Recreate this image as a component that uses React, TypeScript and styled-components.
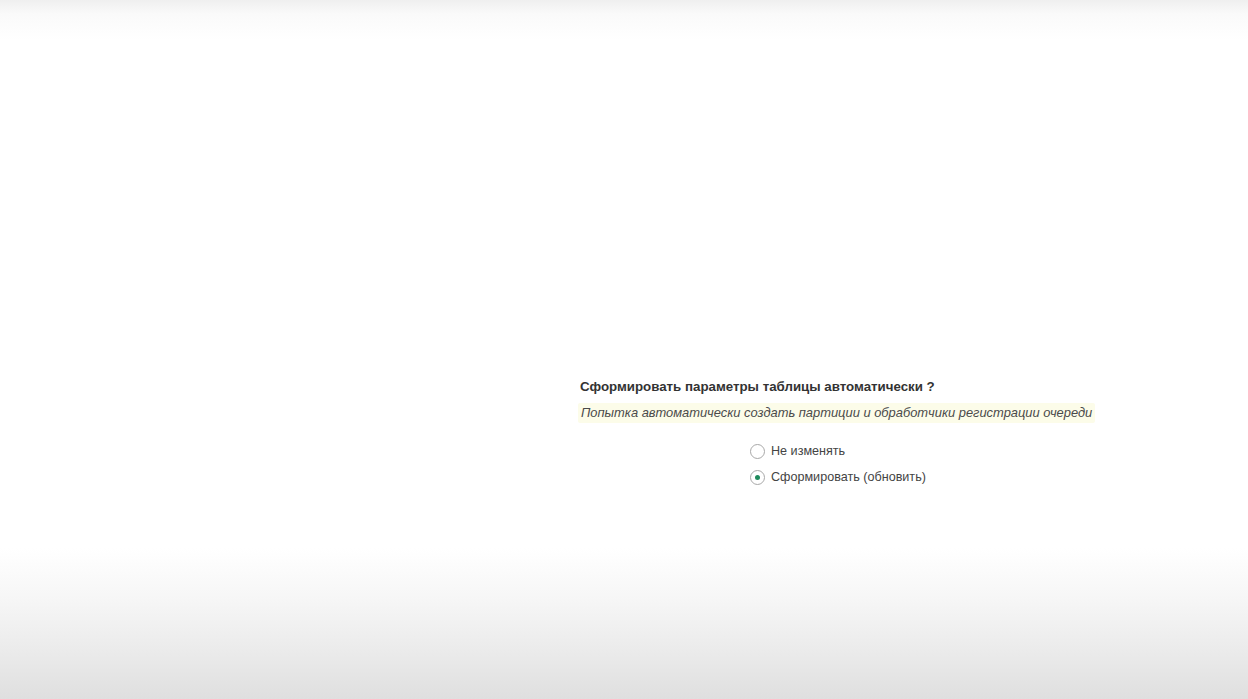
import React, { useState } from "react";
import styled, { createGlobalStyle } from "styled-components";

const Global = createGlobalStyle`
  html, body { margin: 0; padding: 0; }
  body { font-family: Arial, "Liberation Sans", sans-serif; }
`;

const Page = styled.div`
  width: 1248px;
  height: 699px;
  box-sizing: border-box;
  background: linear-gradient(
    to bottom,
    #efefef 0px,
    #fafafa 14px,
    #ffffff 40px,
    #ffffff 548px,
    #f6f6f6 600px,
    #ebebeb 650px,
    #dfdfdf 699px
  );
  padding: 379px 0 0 578px;
  overflow: hidden;
`;

const Form = styled.div`
  display: flex;
  flex-direction: column;
  align-items: flex-start;
`;

const Title = styled.div`
  font-family: "Liberation Sans", Arial, sans-serif;
  font-weight: bold;
  font-size: 13.3px;
  color: #333333;
  line-height: 16px;
  padding-left: 2px;
`;

const Hint = styled.div`
  margin-top: 8px;
  font-family: "Liberation Sans", Arial, sans-serif;
  font-style: italic;
  font-size: 12.9px;
  color: #4a4a4a;
  line-height: 18px;
  padding: 1px 3px 1px 3px;
  background: #fcfce9;
  border-radius: 2px;
`;

const RadioGroup = styled.div`
  margin-top: 20px;
  margin-left: 172px;
  display: flex;
  flex-direction: column;
  gap: 9px;
`;

const Option = styled.label`
  display: flex;
  align-items: center;
  gap: 6px;
  cursor: pointer;
  font-family: "Liberation Sans", Arial, sans-serif;
  font-size: 12.6px;
  color: #444444;
  line-height: 17px;
`;

const Circle = styled.span<{ $checked: boolean }>`
  width: 13px;
  height: 13px;
  border-radius: 50%;
  border: 1px solid #a8a8a8;
  background: #ffffff;
  display: flex;
  align-items: center;
  justify-content: center;
  flex: none;
  &::after {
    content: "";
    width: 5px;
    height: 5px;
    border-radius: 50%;
    background: #1f8a5c;
    display: ${(p) => (p.$checked ? "block" : "none")};
  }
`;

const options = ["Не изменять", "Сформировать (обновить)"];

export default function App() {
  const [value, setValue] = useState(1);
  return (
    <>
      <Global />
      <Page>
        <Form>
          <Title>Сформировать параметры таблицы автоматически ?</Title>
          <Hint>Попытка автоматически создать партиции и обработчики регистрации очереди</Hint>
          <RadioGroup>
            {options.map((o, i) => (
              <Option key={o} onClick={() => setValue(i)}>
                <Circle $checked={value === i} />
                {o}
              </Option>
            ))}
          </RadioGroup>
        </Form>
      </Page>
    </>
  );
}
